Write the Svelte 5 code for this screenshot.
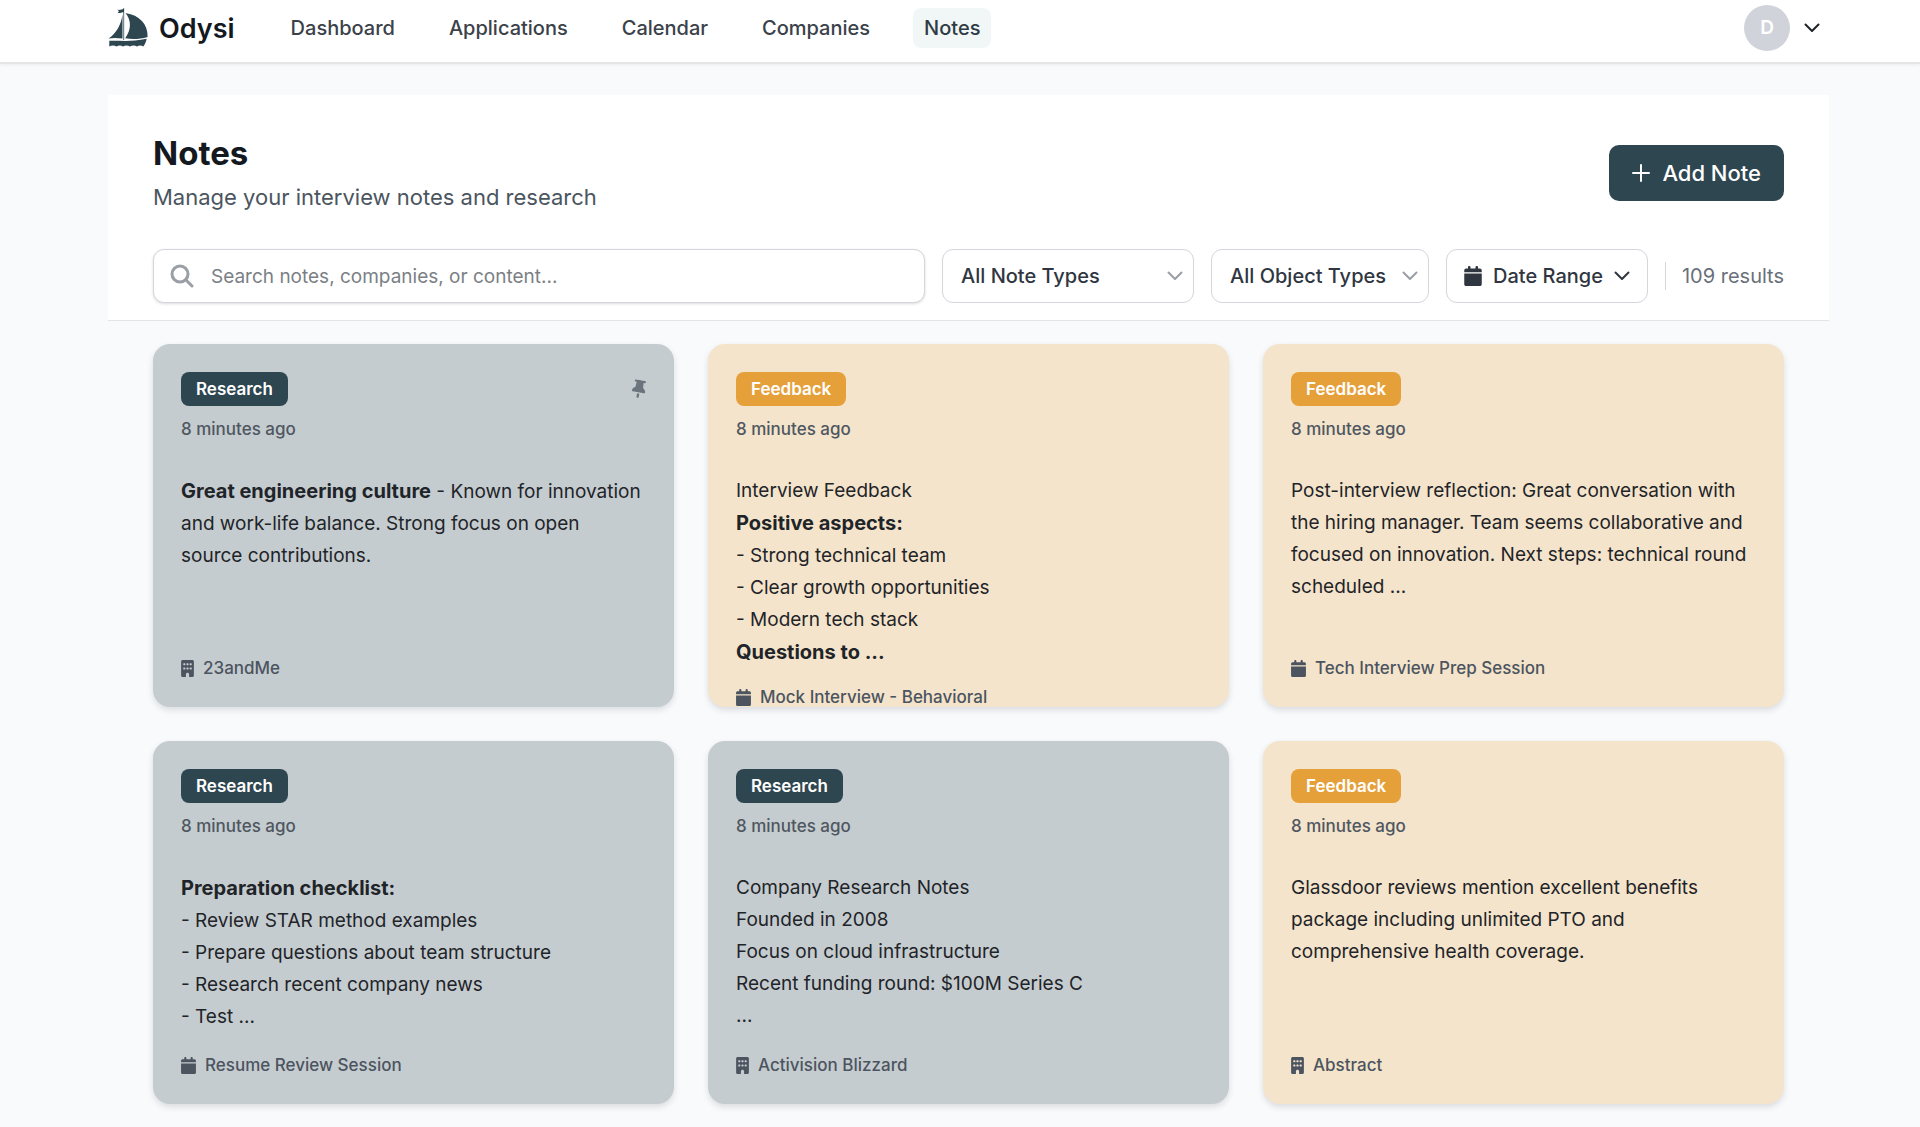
<script lang="ts">
    type Kind = 'Research' | 'Feedback';
    type Line = { text: string; strong?: string };

    interface Note {
        id: number;
        kind: Kind;
        time: string;
        lines: Line[];
        source: string;
        icon: 'building' | 'calendar';
        pinned?: boolean;
    }

    const links = ['Dashboard', 'Applications', 'Calendar', 'Companies', 'Notes'];
    const active = 'Notes';

    let search = $state('');
    let noteType = $state('All Note Types');
    let objectType = $state('All Object Types');

    const notes: Note[] = [
        {
            id: 1,
            kind: 'Research',
            time: '8 minutes ago',
            lines: [
                { strong: 'Great engineering culture', text: ' - Known for innovation' },
                { text: 'and work-life balance. Strong focus on open' },
                { text: 'source contributions.' }
            ],
            source: '23andMe',
            icon: 'building',
            pinned: true
        },
        {
            id: 2,
            kind: 'Feedback',
            time: '8 minutes ago',
            lines: [
                { text: 'Interview Feedback' },
                { strong: 'Positive aspects:', text: '' },
                { text: '- Strong technical team' },
                { text: '- Clear growth opportunities' },
                { text: '- Modern tech stack' },
                { strong: 'Questions to ...', text: '' }
            ],
            source: 'Mock Interview - Behavioral',
            icon: 'calendar'
        },
        {
            id: 3,
            kind: 'Feedback',
            time: '8 minutes ago',
            lines: [{
                text: 'Post-interview reflection: Great conversation with the hiring manager. Team seems collaborative and focused on innovation. Next steps: technical round scheduled ...'
            }],
            source: 'Tech Interview Prep Session',
            icon: 'calendar'
        },
        {
            id: 4,
            kind: 'Research',
            time: '8 minutes ago',
            lines: [
                { strong: 'Preparation checklist:', text: '' },
                { text: '- Review STAR method examples' },
                { text: '- Prepare questions about team structure' },
                { text: '- Research recent company news' },
                { text: '- Test ...' }
            ],
            source: 'Resume Review Session',
            icon: 'calendar'
        },
        {
            id: 5,
            kind: 'Research',
            time: '8 minutes ago',
            lines: [
                { text: 'Company Research Notes' },
                { text: 'Founded in 2008' },
                { text: 'Focus on cloud infrastructure' },
                { text: 'Recent funding round: $100M Series C' },
                { text: '...' }
            ],
            source: 'Activision Blizzard',
            icon: 'building'
        },
        {
            id: 6,
            kind: 'Feedback',
            time: '8 minutes ago',
            lines: [{
                text: 'Glassdoor reviews mention excellent benefits package including unlimited PTO and comprehensive health coverage.'
            }],
            source: 'Abstract',
            icon: 'building'
        }
    ];
</script>

{#snippet chevron()}
    <svg class="chevron" viewBox="0 0 16 10" aria-hidden="true">
        <path d="M1.5 1.5 8 8l6.500-6.500" />
    </svg>
{/snippet}

{#snippet calendar()}
    <svg class="glyph calendar" viewBox="0 0 448 512" aria-hidden="true">
        <path d="M96 32v32H48C21.500 64 0 85.500 0 112v48h448v-48c0-26.500-21.500-48-48-48h-48V32c0-17.700-14.300-32-32-32s-32 14.300-32 32v32H160V32c0-17.700-14.300-32-32-32S96 14.300 96 32zM448 192H0v272c0 26.500 21.500 48 48 48h352c26.500 0 48-21.500 48-48V192z" />
    </svg>
{/snippet}

{#snippet building()}
    <svg class="glyph building" viewBox="0 0 384 512" aria-hidden="true">
        <path fill-rule="evenodd" d="M48 0C21.500 0 0 21.500 0 48v416c0 26.500 21.500 48 48 48h96v-80c0-26.500 21.500-48 48-48s48 21.500 48 48v80h96c26.500 0 48-21.500 48-48V48c0-26.500-21.500-48-48-48H48zM64 240c0-8.800 7.200-16 16-16h32c8.800 0 16 7.200 16 16v32c0 8.800-7.200 16-16 16H80c-8.800 0-16-7.200-16-16v-32zm112-16h32c8.800 0 16 7.200 16 16v32c0 8.800-7.200 16-16 16h-32c-8.800 0-16-7.200-16-16v-32c0-8.800 7.200-16 16-16zm80 16c0-8.800 7.200-16 16-16h32c8.800 0 16 7.200 16 16v32c0 8.800-7.200 16-16 16h-32c-8.800 0-16-7.200-16-16v-32zM80 96h32c8.800 0 16 7.200 16 16v32c0 8.800-7.200 16-16 16H80c-8.800 0-16-7.200-16-16v-32c0-8.800 7.200-16 16-16zm80 16c0-8.800 7.200-16 16-16h32c8.800 0 16 7.200 16 16v32c0 8.800-7.200 16-16 16h-32c-8.800 0-16-7.200-16-16v-32zm112-16h32c8.800 0 16 7.200 16 16v32c0 8.800-7.200 16-16 16h-32c-8.800 0-16-7.200-16-16v-32c0-8.800 7.200-16 16-16z" />
    </svg>
{/snippet}

<header class="topbar">
    <a class="brand" href="#home">
        <svg class="logo" viewBox="0 0 40 40" aria-hidden="true">
            <path d="M15.700 0v32" class="mast" />
            <path d="M16 1c-2.200-.2-3.200 1.300-6.600.8l1.600 1.400-1.500 1.600c2.800.6 4-.8 6.500-.6z" />
            <path d="M14.500 6.500C13 17 8.500 25 .5 30.600c4.500-1 9.400-.8 14 0z" />
            <path d="M17.500 5c5.800 7.500 6.200 16-.3 25.300 7 1.200 15 .9 22.400-1.300C40 16 31.500 7.200 17.500 5z" />
            <path d="M1.300 32.800c12-.3 22 1.300 37.400-2-.5 2.800-1.700 5.300-3.400 7.700-2-1.300-4.300-1.300-6.300 0-2-1.300-5-1.300-7 0-2-1.300-5-1.300-7 0-2-1.300-4.500-1.300-6.500 0-2-1.300-5-1.300-7.200 0z" />
        </svg>
        <span>Odysi</span>
    </a>
    <nav class="links">
        {#each links as link}
            <a href="#{link.toLowerCase()}" class:active={link === active}>{link}</a>
        {/each}
    </nav>
    <button class="account" aria-label="Account menu">
        <span class="avatar">D</span>
        {@render chevron()}
    </button>
</header>

<main>
    <section class="panel">
        <div class="heading">
            <div>
                <h1>Notes</h1>
                <p>Manage your interview notes and research</p>
            </div>
            <button class="add">
                <svg viewBox="0 0 18 18" aria-hidden="true"><path d="M9 1v16M1 9h16" /></svg>
                Add Note
            </button>
        </div>

        <div class="filters">
            <label class="search">
                <svg viewBox="0 0 24 24" aria-hidden="true">
                    <circle cx="10" cy="10" r="8" />
                    <path d="m16 16 6 6" />
                </svg>
                <input type="text" aria-label="Search notes" placeholder="Search notes, companies, or content..." bind:value={search} />
            </label>
            <label class="pick wide">
                <select aria-label="Note type" bind:value={noteType}>
                    <option>All Note Types</option>
                    <option>Research</option>
                    <option>Feedback</option>
                </select>
                {@render chevron()}
            </label>
            <label class="pick">
                <select aria-label="Object type" bind:value={objectType}>
                    <option>All Object Types</option>
                    <option>Company</option>
                    <option>Event</option>
                </select>
                {@render chevron()}
            </label>
            <button class="range">
                {@render calendar()}
                Date Range
                {@render chevron()}
            </button>
            <span class="results">109 results</span>
        </div>
    </section>

    <section class="grid">
        {#each notes as note (note.id)}
            <article class="card {note.kind.toLowerCase()}">
                <div class="top">
                    <span class="badge">{note.kind}</span>
                    {#if note.pinned}
                        <svg class="pin" viewBox="0 0 384 512" role="img" aria-label="Pinned">
                            <path d="M32 32C32 14.300 46.300 0 64 0h256c17.700 0 32 14.300 32 32s-14.300 32-32 32h-29.500l11.400 148.200c36.700 19.900 65.700 53.200 79.500 94.700l1 3c3.300 9.800 1.600 20.500-4.400 28.800S362.300 352 352 352H32c-10.300 0-19.900-4.900-26-13.300s-7.700-19.100-4.400-28.800l1-3c13.800-41.500 42.800-74.800 79.500-94.700L93.500 64H64c-17.700 0-32-14.300-32-32zm128 352h64v96c0 17.700-14.300 32-32 32s-32-14.300-32-32v-96z" />
                        </svg>
                    {/if}
                </div>
                <time>{note.time}</time>
                <div class="body">
                    {#each note.lines as line}
                        <p>{#if line.strong}<strong>{line.strong}</strong>{/if}{line.text}</p>
                    {/each}
                </div>
                <footer>
                    {#if note.icon === 'calendar'}
                        {@render calendar()}
                    {:else}
                        {@render building()}
                    {/if}
                    {note.source}
                </footer>
            </article>
        {/each}
    </section>
</main>

<style>
    :global(body) {
        margin: 0;
        background: #f9fafc;
        color: #1f2429;
        font-family: Inter, "Liberation Sans", sans-serif;
        font-size: 20px;
    }

    * {
        box-sizing: border-box;
    }

    h1, p {
        margin: 0;
    }

    button, input, select {
        font: inherit;
        color: inherit;
    }

    button {
        cursor: pointer;
    }

    .chevron {
        width: 16px;
        height: 10px;
        flex: none;
        fill: none;
        stroke: currentColor;
        stroke-width: 2;
        stroke-linecap: round;
        stroke-linejoin: round;
    }

    .glyph {
        flex: none;
        fill: currentColor;
    }

    /* Top bar */
    .topbar {
        display: flex;
        align-items: center;
        padding: 5px 91px 11px 108px;
        background: #fff;
        border-bottom: 2px solid #e3e5e7;
        box-shadow: 0 1px 3px rgba(0, 0, 0, 0.06);
    }

    .brand {
        display: flex;
        align-items: center;
        gap: 11px;
        color: #14181f;
        font-size: 27px;
        font-weight: 600;
        text-decoration: none;
    }

    .logo {
        width: 40px;
        height: 40px;
        fill: #2e4650;
    }

    .mast {
        stroke: #5d7078;
        stroke-width: 1;
    }

    .links {
        display: flex;
        gap: 32px;
        margin-left: 45px;
    }

    .links a {
        padding: 0 11px;
        border-radius: 8px;
        color: #3b4149;
        font-weight: 500;
        line-height: 40px;
        text-decoration: none;
    }

    .links .active {
        background: #f1f6f6;
        color: #2f3a44;
    }

    .account {
        display: flex;
        align-items: center;
        gap: 14px;
        margin-left: auto;
        padding: 0 9px 0 0;
        border: 0;
        background: none;
    }

    .avatar {
        width: 46px;
        border-radius: 50%;
        background: #d0d3d9;
        color: #fff;
        font-size: 19px;
        font-weight: 600;
        line-height: 46px;
        text-align: center;
    }

    /* Heading and filters */
    main {
        padding: 31px 91px 25px 108px;
    }

    .panel {
        padding: 36px 45px 17px;
        background: #fff;
        border-bottom: 1px solid #e1e4e8;
    }

    .heading {
        display: flex;
        align-items: center;
        justify-content: space-between;
    }

    h1 {
        color: #14181f;
        font-size: 33px;
        font-weight: 700;
        line-height: 45px;
    }

    .heading p {
        margin-top: 5px;
        color: #4b5560;
        font-size: 22px;
        line-height: 33px;
    }

    .add {
        display: flex;
        align-items: center;
        gap: 12px;
        height: 56px;
        padding: 0 23px;
        border: 0;
        border-radius: 10px;
        background: #2e4650;
        color: #fff;
        font-size: 22px;
        font-weight: 500;
    }

    .add svg {
        width: 18px;
        height: 18px;
        fill: none;
        stroke: currentColor;
        stroke-width: 2;
        stroke-linecap: round;
    }

    .filters {
        display: flex;
        align-items: center;
        gap: 17px;
        margin-top: 35px;
    }

    .search, .pick, .range {
        display: flex;
        align-items: center;
        height: 54px;
        border: 1px solid #d3d6da;
        border-radius: 11px;
        background: #fff;
    }

    .search {
        flex: 1;
        gap: 17px;
        padding: 0 16px;
        box-shadow: 0 1px 3px rgba(0, 0, 0, 0.14);
    }

    .search svg {
        width: 24px;
        height: 24px;
        fill: none;
        stroke: #9a9fa6;
        stroke-width: 3;
        stroke-linecap: round;
    }

    .search input {
        flex: 1;
        min-width: 0;
        padding: 0;
        border: 0;
        outline: none;
        background: none;
        font-size: 19px;
    }

    .search input::placeholder {
        color: #7b7f85;
        opacity: 1;
    }

    .pick, .range {
        color: #30363f;
        font-weight: 500;
    }

    /* the arrow sits on top of the select's own padding */
    .pick {
        position: relative;
        width: 218px;
    }

    .pick.wide {
        width: 252px;
    }

    .pick select {
        width: 100%;
        height: 100%;
        padding: 0 36px 0 18px;
        border: 0;
        border-radius: 11px;
        appearance: none;
        background: none;
    }

    .pick .chevron {
        position: absolute;
        right: 10px;
        color: #9a9fa6;
        pointer-events: none;
    }

    .range {
        gap: 11px;
        padding: 0 17px;
    }

    .range .calendar {
        width: 18px;
        height: 20px;
    }

    .results {
        padding-left: 16px;
        border-left: 1px solid #d3d6da;
        color: #6a7079;
        line-height: 28px;
    }

    /* Cards */
    .grid {
        display: grid;
        grid-template-columns: repeat(3, 1fr);
        gap: 34px;
        padding: 23px 45px 0;
    }

    .card {
        display: flex;
        flex-direction: column;
        height: 363px;
        padding: 28px;
        overflow: hidden;
        border-radius: 17px;
        box-shadow: 0 3px 6px rgba(30, 40, 50, 0.14);
    }

    .research {
        background: #c5cccf;
    }

    .feedback {
        background: #f4e4cb;
    }

    .top {
        display: flex;
        align-items: center;
        justify-content: space-between;
    }

    .badge {
        padding: 0 15px;
        border-radius: 8px;
        color: #fff;
        font-size: 17px;
        font-weight: 600;
        line-height: 34px;
    }

    .research .badge {
        background: #2e4650;
    }

    .feedback .badge {
        background: #e5a03a;
    }

    .pin {
        width: 14px;
        height: 18px;
        fill: #6b747d;
        transform: rotate(10deg);
    }

    time {
        margin-top: 12px;
        color: #4f5761;
        font-size: 17px;
        font-weight: 500;
        line-height: 22px;
    }

    .body {
        flex: none;
        margin-top: 35px;
        font-size: 19px;
        line-height: 32px;
    }

    strong {
        font-size: 20px;
        font-weight: 700;
    }

    footer {
        display: flex;
        flex: none;
        align-items: center;
        gap: 9px;
        margin-top: auto;
        padding-top: 17px;
        color: #4c5460;
        font-size: 17px;
        font-weight: 500;
        line-height: 22px;
    }

    footer .calendar {
        width: 15px;
        height: 17px;
    }

    footer .building {
        width: 13px;
        height: 17px;
    }
</style>
